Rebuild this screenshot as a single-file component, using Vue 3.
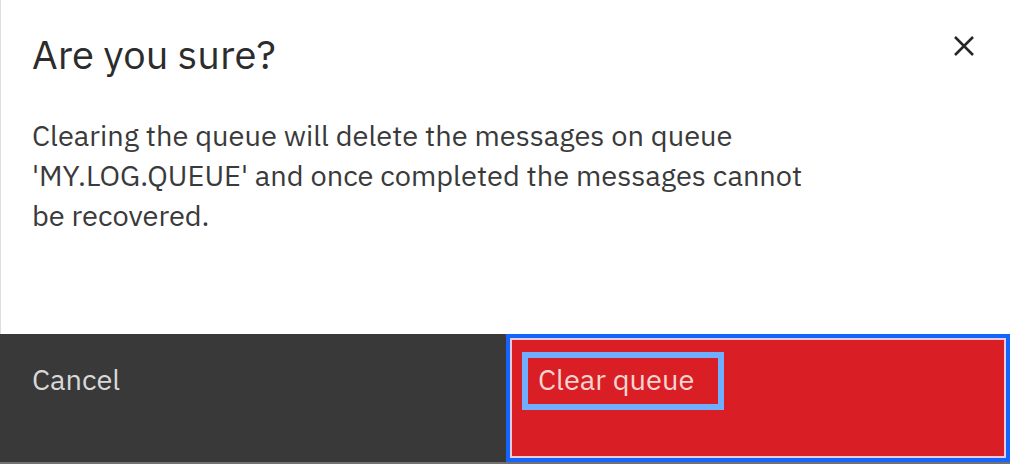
<script setup>
import { ref } from 'vue'

const queueName = ref('MY.LOG.QUEUE')
</script>

<template>
  <section class="modal" role="dialog" aria-labelledby="modal-title" aria-describedby="modal-text">
    <header class="modal-header">
      <h1 id="modal-title">Are you sure?</h1>
      <button class="close" type="button" aria-label="Close">
        <svg viewBox="0 0 20 20" aria-hidden="true">
          <path d="M1 1 19 19M19 1 1 19" />
        </svg>
      </button>
    </header>
    <p id="modal-text" class="modal-text">
      Clearing the queue will delete the messages on queue '{{ queueName }}' and once completed the messages cannot be recovered.
    </p>
    <footer class="modal-footer">
      <button class="action cancel" type="button">Cancel</button>
      <button class="action danger" type="button"><span class="marker">Clear queue</span></button>
    </footer>
  </section>
</template>

<style>
body {
  margin: 0;
  background: #fff;
}
</style>

<style scoped>
.modal {
  box-sizing: border-box;
  min-height: 100vh;
  display: flex;
  flex-direction: column;
  background: linear-gradient(to right, #dcdfe1 1px, #fff 1px);
  border-bottom: 2px solid #717171;
  color: #3a3a3a;
  font-family: "IBM Plex Sans", Roboto, "Liberation Sans", sans-serif;
}

.modal-header {
  display: flex;
  justify-content: space-between;
  align-items: flex-start;
  padding: 28px 32px 0;
}

h1 {
  margin: 0;
  font-size: 40px;
  font-weight: 400;
  line-height: 52px;
  color: #2c2c2c;
}

.close {
  display: grid;
  place-items: center;
  width: 28px;
  height: 36px;
  padding: 0;
  border: 0;
  background: none;
  cursor: pointer;
}

.close svg {
  width: 20px;
  height: 20px;
  fill: none;
  stroke: #262626;
  stroke-width: 2.5;
}

.modal-text {
  max-width: 784px;
  margin: 0;
  padding: 35px 32px 96px;
  font-size: 29px;
  line-height: 40px;
}

.modal-footer {
  display: grid;
  grid-template-columns: 506fr 504fr;
  margin-top: auto;
}

.action {
  display: flex;
  align-items: flex-start;
  box-sizing: border-box;
  min-height: 128px;
  margin: 0;
  border: 0;
  font: inherit;
  font-size: 29px;
  line-height: 40px;
  text-align: left;
  cursor: pointer;
}

.cancel {
  padding: 25px 32px;
  background: #393939;
  color: #d8d8d8;
}

.danger {
  padding: 14px 12px;
  border: 4px solid #1464ff;
  box-shadow: inset 0 0 0 2px #edc8d6;
  background: #da1e26;
  color: #f6d5cf;
}

.marker {
  padding: 1px 24px 5px 10px;
  border: 6px solid #70aeff;
}
</style>
